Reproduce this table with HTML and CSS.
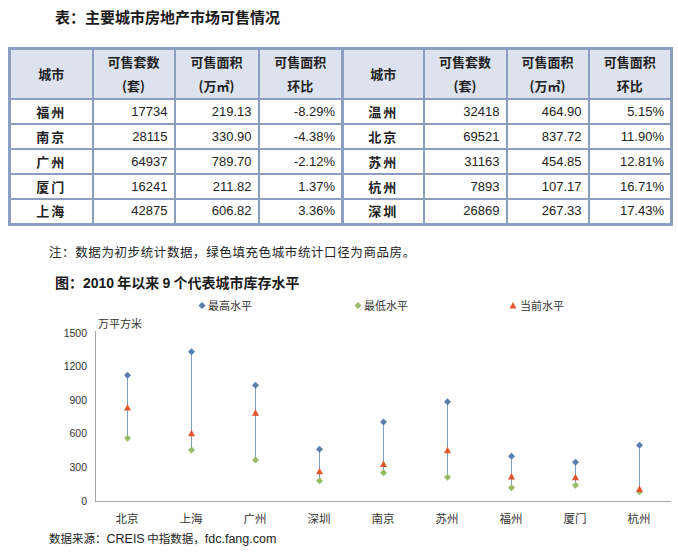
FILE: index.html
```html
<!DOCTYPE html>
<html lang="zh">
<head>
<meta charset="utf-8">
<link rel="stylesheet" href="styles.css">
</head>
<body>
<div class="page">
  <h1 class="title">表：主要城市房地产市场可售情况</h1>
  <table class="grid">
    <colgroup>
      <col class="c1"><col class="c2"><col class="c3"><col class="c4">
      <col class="c5"><col class="c6"><col class="c7"><col class="c8">
    </colgroup>
    <thead>
      <tr>
        <th>城市</th><th>可售套数<br>(套)</th><th>可售面积<br>(万㎡)</th><th class="split">可售面积<br>环比</th>
        <th>城市</th><th>可售套数<br>(套)</th><th>可售面积<br>(万㎡)</th><th>可售面积<br>环比</th>
      </tr>
    </thead>
    <tbody>
      <tr><td class="city">福州</td><td>17734</td><td>219.13</td><td class="split">-8.29%</td><td class="city">温州</td><td>32418</td><td>464.90</td><td>5.15%</td></tr>
      <tr><td class="city">南京</td><td>28115</td><td>330.90</td><td class="split">-4.38%</td><td class="city">北京</td><td>69521</td><td>837.72</td><td>11.90%</td></tr>
      <tr><td class="city">广州</td><td>64937</td><td>789.70</td><td class="split">-2.12%</td><td class="city">苏州</td><td>31163</td><td>454.85</td><td>12.81%</td></tr>
      <tr><td class="city">厦门</td><td>16241</td><td>211.82</td><td class="split">1.37%</td><td class="city">杭州</td><td>7893</td><td>107.17</td><td>16.71%</td></tr>
      <tr><td class="city">上海</td><td>42875</td><td>606.82</td><td class="split">3.36%</td><td class="city">深圳</td><td>26869</td><td>267.33</td><td>17.43%</td></tr>
    </tbody>
  </table>
  <p class="note">注：数据为初步统计数据，绿色填充色城市统计口径为商品房。</p>
  <h2 class="fig-title">图：<span class="num">2010</span> 年以来 <span class="num">9</span> 个代表城市库存水平</h2>
  <svg class="chart" width="678" height="232" viewBox="0 295 678 232" xmlns="http://www.w3.org/2000/svg">
    <g class="legend">
      <path d="M202 301 L205.5 304.5 L202 308 L198.5 304.5 Z" fill="#5a7fae"/>
      <text x="208" y="309">最高水平</text>
      <path d="M358 301 L361.5 304.5 L358 308 L354.5 304.5 Z" fill="#9bb967"/>
      <text x="364" y="309">最低水平</text>
      <path d="M513 301 L516.5 307.5 L509.5 307.5 Z" fill="#e0552a"/>
      <text x="520" y="309">当前水平</text>
    </g>
    <text class="unit" x="98" y="327">万平方米</text>
    <line x1="95.5" y1="330" x2="95.5" y2="500.5" stroke="#a6a6a6" stroke-width="1"/>
    <line x1="95" y1="500.5" x2="671" y2="500.5" stroke="#a6a6a6" stroke-width="1"/>
    <g class="ylab">
      <text x="87" y="335.5">1500</text>
      <text x="87" y="369">1200</text>
      <text x="87" y="402.5">900</text>
      <text x="87" y="436">600</text>
      <text x="87" y="469.5">300</text>
      <text x="87" y="503.5">0</text>
    </g>
    <g class="xlab">
      <text x="127" y="522">北京</text>
      <text x="191" y="522">上海</text>
      <text x="255" y="522">广州</text>
      <text x="319" y="522">深圳</text>
      <text x="383" y="522">南京</text>
      <text x="447" y="522">苏州</text>
      <text x="511" y="522">福州</text>
      <text x="575" y="522">厦门</text>
      <text x="639" y="522">杭州</text>
    </g>
    <g id="plot"></g>
  </svg>
  <p class="source">数据来源：<span class="lat">CREIS</span> 中指数据，<span class="lat">fdc.fang.com</span></p>
</div>
<script src="chart.js"></script>
</body>
</html>
```
FILE: chart.js
```js
(function () {
  var data = [
    [1125, 561, 837.72],
    [1337, 457, 606.82],
    [1036, 367, 789.70],
    [463, 182, 267.33],
    [707, 253, 330.90],
    [889, 212, 454.85],
    [400, 119, 219.13],
    [346, 140, 211.82],
    [498, 83, 107.17]
  ];
  var ns = "http://www.w3.org/2000/svg";
  var g = document.getElementById("plot");
  function y(v) { return 500 - v * 0.1117; }
  function el(name, attrs) {
    var e = document.createElementNS(ns, name);
    for (var k in attrs) e.setAttribute(k, attrs[k]);
    g.appendChild(e);
    return e;
  }
  function diamond(x, yy, color) {
    el("path", { d: "M" + x + " " + (yy - 3.5) + " L" + (x + 3.5) + " " + yy + " L" + x + " " + (yy + 3.5) + " L" + (x - 3.5) + " " + yy + " Z", fill: color });
  }
  data.forEach(function (d, i) {
    var xs = 127.5 + i * 64;
    el("line", { x1: xs, y1: y(d[0]), x2: xs, y2: y(d[1]), stroke: "#7f9dc3", "stroke-width": 1 });
    diamond(xs, y(d[0]), "#5a7fae");
    diamond(xs, y(d[1]), "#9bb967");
    var t = y(d[2]);
    el("path", { d: "M" + xs + " " + (t - 3.5) + " L" + (xs + 3.5) + " " + (t + 3) + " L" + (xs - 3.5) + " " + (t + 3) + " Z", fill: "#e0552a" });
  });
})();
```
FILE: styles.css
```css
* { box-sizing: border-box; }
body {
  margin: 0;
  background: #ffffff;
  color: #222;
  font-family: "Liberation Sans", "Noto Sans CJK SC", sans-serif;
}
.page {
  width: 678px;
  height: 557px;
  overflow: hidden;
  display: flex;
  flex-direction: column;
}
.title {
  margin: 7px 0 0 55px;
  font-family: "Noto Sans CJK SC", sans-serif;
  font-size: 15px;
  font-weight: 700;
  line-height: 20px;
  height: 20px;
  color: #1a1a1a;
}
.grid {
  margin: 20px 0 0 8px;
  width: 662px;
  border-collapse: collapse;
  table-layout: fixed;
  border: 3px solid #8c9dbf;
}
.c1 { width: 83px; }
.c2 { width: 82px; }
.c3 { width: 84px; }
.c4 { width: 84px; }
.c5 { width: 81px; }
.c6 { width: 83px; }
.c7 { width: 82px; }
.c8 { width: 83px; }
.grid th, .grid td {
  border: 2px solid #8c9dbf;
  padding: 0;
}
.grid th.split, .grid td.split { border-right-width: 3px; }
.grid th {
  background: #dce3ef;
  font-family: "Noto Sans CJK SC", sans-serif;
  font-size: 13px;
  font-weight: 700;
  line-height: 24px;
  height: 50px;
  color: #222;
  text-align: center;
}
.grid td {
  height: 25px;
  font-size: 13px;
  line-height: 20px;
  text-align: right;
  padding-right: 6px;
  color: #222;
}
.grid td.city {
  text-align: center;
  padding-right: 0;
  font-family: "Noto Sans CJK SC", sans-serif;
  font-weight: 700;
  letter-spacing: 2px;
}
.note {
  margin: 17px 0 0 49px;
  font-family: "Noto Sans CJK SC", sans-serif;
  font-size: 12.5px;
  line-height: 18px;
  color: #222;
  letter-spacing: 0.6px;
}
.fig-title {
  margin: 11px 0 0 55px;
  font-family: "Noto Sans CJK SC", sans-serif;
  font-size: 14px;
  font-weight: 700;
  line-height: 20px;
  color: #1a1a1a;
}
.fig-title .num { font-family: "Liberation Sans", sans-serif; }
.chart {
  display: block;
  margin-top: 3px;
  flex: none;
}
.legend text, .unit {
  font-family: "Noto Sans CJK SC", sans-serif;
  font-size: 11px;
  fill: #333;
}
.ylab text {
  font-family: "Liberation Sans", sans-serif;
  font-size: 10.5px;
  fill: #333;
  text-anchor: end;
}
.xlab text {
  font-family: "Noto Sans CJK SC", sans-serif;
  font-size: 11.5px;
  fill: #333;
  text-anchor: middle;
}
.source {
  margin: 2px 0 0 49px;
  font-family: "Noto Sans CJK SC", sans-serif;
  font-size: 11.5px;
  line-height: 16px;
  color: #222;
}
.source .lat { font-family: "Liberation Sans", sans-serif; font-size: 12.5px; }
```
